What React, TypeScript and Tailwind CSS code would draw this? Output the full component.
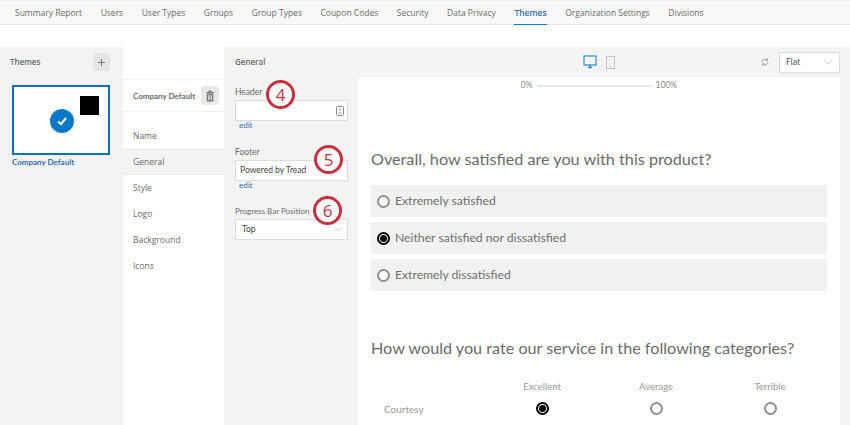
import React from "react";

const nav = [
  "Summary Report", "Users", "User Types", "Groups", "Group Types", "Coupon Codes", "Security", "Data Privacy", "Themes", "Organization Settings", "Divisions",
];
const ui = { fontFamily: '"Open Sans", "Liberation Sans", sans-serif' };
const poppins = { fontFamily: 'Lato, "Noto Sans", sans-serif' };

function Badge({ n, className }: { n: string; className: string }) {
  return (
    <div className={`absolute w-[29px] h-[29px] rounded-full border-[3px] border-[#c8303e] bg-white flex items-center justify-center text-[#c8303e] text-[17px] leading-none ${className}`} style={ui}>
      {n}
    </div>
  );
}

function Radio({ on }: { on?: boolean }) {
  return (
    <span className={`shrink-0 w-[13px] h-[13px] rounded-full border-2 flex items-center justify-center bg-white ${on ? "border-black" : "border-[#8f8f8f]"}`}>
      {on && <span className="w-[7px] h-[7px] rounded-full bg-black" />}
    </span>
  );
}

function Choice({ label, on }: { label: string; on?: boolean }) {
  return (
    <div className="h-8 bg-[#f1f1f1] flex items-center gap-[5px] pl-[6px] text-[12.2px] text-[#6f6f6f]" style={poppins}>
      <Radio on={on} />
      <span>{label}</span>
    </div>
  );
}

function Chevron() {
  return (
    <svg width="9" height="5" viewBox="0 0 10 6" fill="none" stroke="#bdbdbd" strokeWidth="1">
      <path d="M0.5 0.5 5 5 9.5 0.5" />
    </svg>
  );
}

export default function App() {
  return (
    <div className="w-[850px] h-[425px] overflow-hidden bg-white flex flex-col text-[#6b6b6b]" style={ui}>
      <div className="h-[25px] shrink-0 bg-[#f8f8f8] border-t border-t-[#eeeeee] border-b border-b-[#e3e3e3] flex pl-[15px] gap-[18.5px] text-[8.5px]">
        {nav.map((t) => (
          <div key={t} className={`h-[24px] pt-[6px] leading-[12px] whitespace-nowrap ${t === "Themes" ? "text-[#2a6fb0] font-semibold border-b border-[#0b78c9]" : ""}`}>
            {t}
          </div>
        ))}
      </div>
      <div className="h-[22px] shrink-0" />
      <div className="flex-1 flex min-h-0">
        {/* Themes */}
        <div className="w-[123px] shrink-0 bg-[#f3f3f3] pl-[12px] pr-[13px]">
          <div className="h-[38px] pt-[6px] flex items-start justify-between">
            <span className="text-[8px] font-semibold leading-[18px] -ml-[2px]">Themes</span>
            <div className="w-[17px] h-[18px] bg-[#e5e5e5] rounded-sm flex items-center justify-center">
              <svg width="9" height="9" viewBox="0 0 9 9" stroke="#777" strokeWidth="1"><path d="M4.5 1v7M1 4.5h7" /></svg>
            </div>
          </div>
          <div className="w-[98px] h-[70px] bg-white border-2 border-[#0b6fc2] flex relative">
            <div className="absolute left-[36px] top-[22px] w-[24px] h-[24px] rounded-full bg-[#0b78c9] flex items-center justify-center">
              <svg width="12" height="12" viewBox="0 0 12 12" fill="none" stroke="#fff" strokeWidth="2"><path d="M2 6.5 5 9l5-6" /></svg>
            </div>
            <div className="absolute left-[66px] top-[9px] w-[19px] h-[19px] bg-black" />
          </div>
          <div className="text-[8px] font-bold text-[#2a6fb0] mt-0 leading-[14px]" style={poppins}>Company Default</div>
        </div>
        {/* Sections */}
        <div className="w-[101px] shrink-0 bg-white text-[8.5px]">
          <div className="h-[32px]" />
          <div className="h-[33px] border-y border-[#efefef] flex items-center justify-between pl-[10px] pr-[5px]">
            <span className="text-[8px] font-bold whitespace-nowrap" style={poppins}>Company Default</span>
            <div className="w-[18px] h-[19px] bg-[#e8e8e8] rounded-sm flex items-center justify-center">
              <svg width="10" height="12" viewBox="0 0 10 12" fill="#7a7a7a"><path d="M1 2h8v1H1zM3.5 .5h3V2h-3zM1.7 3.5h6.6V11.5H1.7zM3 5v5h.8V5zM4.6 5v5h.8V5zM6.2 5v5H7V5z" fillRule="evenodd" /></svg>
            </div>
          </div>
          <div className="h-[11px]" />
          {["Name", "General", "Style", "Logo", "Background", "Icons"].map((s) => (
            <div key={s} className={`h-[26px] flex items-center pl-[10px] ${s === "General" ? "bg-[#f3f3f3] border-y border-[#ececec]" : ""}`}>
              {s}
            </div>
          ))}
        </div>
        {/* Editor */}
        <div className="flex-1 bg-[#f3f3f3] flex flex-col min-w-0">
          <div className="h-[30px] shrink-0 relative flex items-center justify-between pl-[11px] pr-[10px]">
            <span className="text-[8px] font-semibold">General</span>
            <div className="absolute left-[359px] top-[8px] flex items-center gap-[9px]">
              <svg width="14" height="14" viewBox="0 0 14 14" fill="none">
                <rect x="1" y="1" width="12" height="9" stroke="#2a8fc4" strokeWidth="1.2" />
                <path d="M5 12.5h4M7 10v2" stroke="#2a8fc4" strokeWidth="1.4" />
              </svg>
              <svg width="9" height="13" viewBox="0 0 9 13" fill="none">
                <rect x="0.5" y="0.5" width="8" height="12" stroke="#c4c4c4" />
                <path d="M4 10.5h1" stroke="#aaa" />
              </svg>
            </div>
            <div className="flex items-center gap-[10px]">
              <svg width="8" height="8" viewBox="0 0 8 8" fill="none" stroke="#a5a5a5" strokeWidth="1"><path d="M1 4a3 3 0 0 1 5-2.2M7 4a3 3 0 0 1-5 2.2" /><path d="M6.5 .5v2h-2M1.5 7.5v-2h2" /></svg>
              <div className="w-[61px] h-[21px] bg-white border border-[#dcdcdc] flex items-center justify-between pl-[6px] pr-[6px] text-[8.5px] text-[#444]">
                <span>Flat</span>
                <Chevron />
              </div>
            </div>
          </div>
          <div className="flex-1 flex min-h-0">
            <div className="w-[134px] shrink-0 pl-[11px] text-[8.5px] relative" style={poppins}>
              <div className="leading-[12px] mt-[9px] mb-[2px]">Header</div>
              <div className="w-[113px] h-[21px] bg-white border border-[#dcdcdc] flex items-center justify-end pr-[3px]">
                <svg width="8" height="10" viewBox="0 0 8 10" fill="none" stroke="#8a8a8a"><rect x="0.5" y="0.5" width="7" height="9" rx="1" /><path d="M4 2.5v2.5M2.5 7h3" /></svg>
              </div>
              <div className="text-[8px] text-[#2a6fb0] pl-[4px] -mt-[1px] leading-[10px]">edit</div>
              <div className="leading-[12px] mt-[16px] mb-[2px]">Footer</div>
              <div className="w-[113px] h-[21px] bg-white border border-[#dcdcdc] flex items-center pl-[4px] text-[#444] whitespace-nowrap">Powered by Tread</div>
              <div className="text-[8px] text-[#2a6fb0] pl-[4px] -mt-[1px] leading-[10px]">edit</div>
              <div className="leading-[12px] text-[8px] mt-[15px] mb-[2px] whitespace-nowrap">Progress Bar Position</div>
              <div className="w-[113px] h-[21px] bg-white border border-[#dcdcdc] flex items-center justify-between pl-[6px] pr-[4px] text-[#444]">
                <span>Top</span>
                <Chevron />
              </div>
              <Badge n="4" className="left-[42px] top-[3px]" />
              <Badge n="5" className="left-[90px] top-[68px]" />
              <Badge n="6" className="left-[89px] top-[119px]" />
            </div>
            {/* Preview */}
            <div className="w-[482px] shrink-0 bg-white pl-[13px] pr-[13px] overflow-hidden" style={poppins}>
              <div className="flex items-center justify-center gap-[3px] h-[17px] text-[8.5px] text-[#8a8a8a]">
                <span>0%</span>
                <div className="w-[115px] h-[2px] bg-[#e6e6e6] mx-[1px]" />
                <span>100%</span>
              </div>
              <div className="mt-[53px] text-[16.2px] leading-[24px] text-[#6b6b6b] whitespace-nowrap">Overall, how satisfied are you with this product?</div>
              <div className="mt-[14px] flex flex-col gap-[5px]">
                <Choice label="Extremely satisfied" />
                <Choice label="Neither satisfied nor dissatisfied" on />
                <Choice label="Extremely dissatisfied" />
              </div>
              <div className="mt-[45px] text-[16.2px] leading-[24px] text-[#6b6b6b] whitespace-nowrap">How would you rate our service in the following categories?</div>
              <div className="mt-[20px] grid grid-cols-[114px_114px_114px_114px] text-[9.5px] text-[#9a9a9a] justify-items-center">
                <div />
                <div className="leading-[14px]">Excellent</div>
                <div className="leading-[14px]">Average</div>
                <div className="leading-[14px]">Terrible</div>
                <div className="justify-self-start pl-[13px] mt-[7px] text-[10px] leading-[16px]">Courtesy</div>
                <div className="mt-[8px]"><Radio on /></div>
                <div className="mt-[8px]"><Radio /></div>
                <div className="mt-[8px]"><Radio /></div>
              </div>
            </div>
          </div>
        </div>
      </div>
    </div>
  );
}
